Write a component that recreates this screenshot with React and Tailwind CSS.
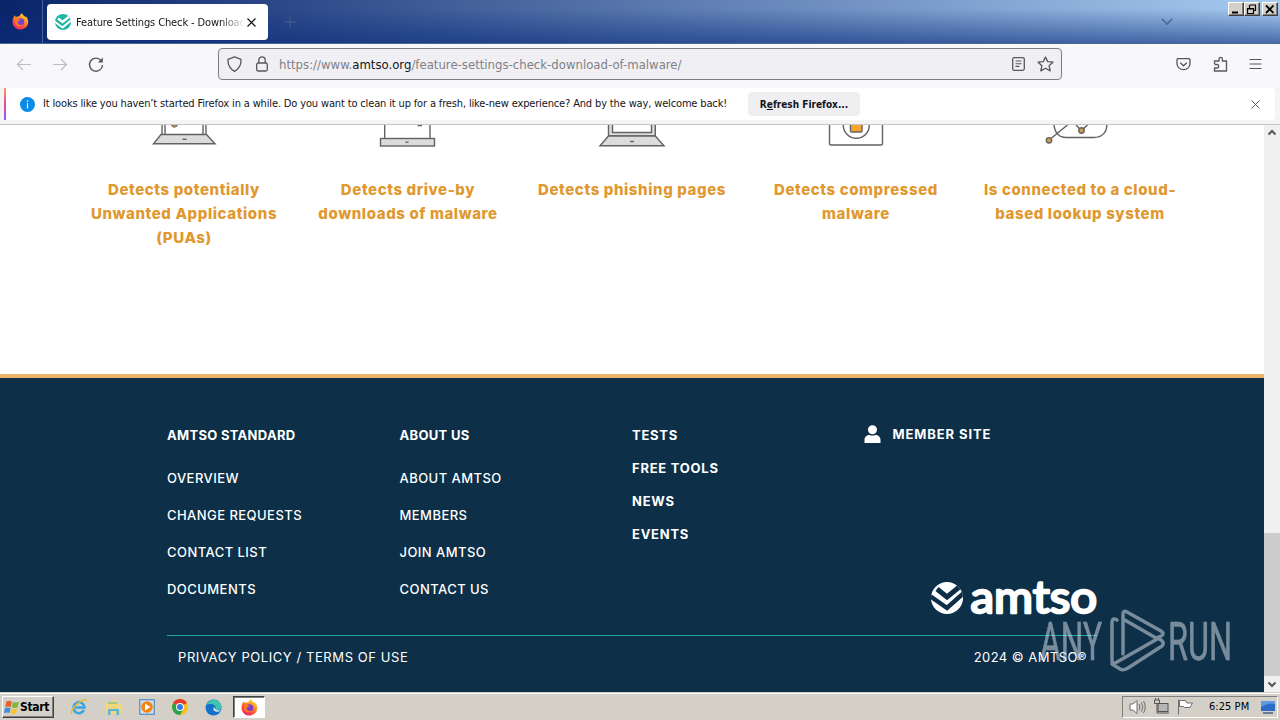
import React from "react";

const features = [
  { lines: ["Detects potentially", "Unwanted Applications", "(PUAs)"], icon: "pua" },
  { lines: ["Detects drive-by", "downloads of malware"], icon: "driveby" },
  { lines: ["Detects phishing pages"], icon: "phishing" },
  { lines: ["Detects compressed", "malware"], icon: "archive" },
  { lines: ["Is connected to a cloud-", "based lookup system"], icon: "cloud" },
];

const linkColumns = [
  {
    title: "AMTSO STANDARD",
    links: ["OVERVIEW", "CHANGE REQUESTS", "CONTACT LIST", "DOCUMENTS"],
  },
  {
    title: "ABOUT US",
    links: ["ABOUT AMTSO", "MEMBERS", "JOIN AMTSO", "CONTACT US"],
  },
];

const FirefoxLogo = () => (
  <svg width="17" height="17" viewBox="0 0 17 17">
    <defs>
      <linearGradient id="fx" x1="0.8" y1="0" x2="0.2" y2="1">
        <stop offset="0" stopColor="#ffe03a" />
        <stop offset="0.4" stopColor="#ff8a1e" />
        <stop offset="0.75" stopColor="#ff3d47" />
        <stop offset="1" stopColor="#e0208c" />
      </linearGradient>
    </defs>
    <path
      d="M1.6 4 L2.6 2.2 L4 4 C5 3.2 6.500 3 7.500 3.200 C8 1.800 9 .8 10.200 .3 C10.500 2 12 2.800 13.300 4 L14 3.500 C17 7 16.800 11 14.500 13.800 C11 17.500 5.500 17.500 2.500 14 C-.2 10.800 .3 6.500 1.600 4Z"
      fill="url(#fx)"
    />
    <circle cx="8.600" cy="9" r="3.700" fill="#7a3fd0" />
    <path d="M2.800 6.500 C4.500 5.500 6.500 5.800 8.500 7 C7.500 8.300 6 8 5.500 9 C5.800 12 9 13 11.500 11 C9.500 15 3.500 14 2.800 9Z" fill="#ff7a1c" />
  </svg>
);

const TabFavicon = () => (
  <svg width="16" height="16" viewBox="0 0 32 32">
    <defs>
      <clipPath id="favicon">
        <circle cx="16" cy="16" r="16" />
      </clipPath>
    </defs>
    <circle cx="16" cy="16" r="16" fill="#1fb5a5" />
    <g clipPath="url(#favicon)" fill="none" stroke="#fff">
      <path d="M6 9 L15 16 L30 4" strokeWidth="5" />
      <path d="M-1 15 L15 27 L34 11" strokeWidth="4" />
    </g>
  </svg>
);

const WindowButton = ({ children }) => (
  <div className="flex h-[14px] w-4 items-center justify-center border border-t-white border-r-[#404040] border-b-[#404040] border-l-white bg-[#d4d0c8] shadow-[inset_-1px_-1px_0_#808080]">
    <svg width="12" height="11" viewBox="0 0 12 11" fill="none" stroke="#000">
      {children}
    </svg>
  </div>
);

const TitleBar = () => (
  <div className="flex h-11 shrink-0 border-b border-[#4c6592] bg-[linear-gradient(to_bottom,transparent_20%,rgba(10,45,125,0.6)),linear-gradient(to_right,#0a246a,#a6caf0)]">
    <div className="flex w-[43px] items-center justify-center border-r border-[#4a5f95] pr-[2px]">
      <FirefoxLogo />
    </div>
    <div className="mt-1 ml-1 flex h-9 w-[221px] items-center rounded bg-white pl-2">
      <TabFavicon />
      <div className="ml-[5px] w-[169px] overflow-hidden pt-[2px] text-[11px] tracking-[-0.12px] whitespace-nowrap text-[#15141a] [mask-image:linear-gradient(to_right,#000_85%,transparent)]">
        Feature Settings Check - Download of Malware
      </div>
      <svg className="ml-[2px]" width="9" height="9" viewBox="0 0 9 9" stroke="#15141a" strokeWidth="1.2">
        <path d="M.5 .5 L8.500 8.500 M8.500 .5 L.5 8.500" />
      </svg>
    </div>
    <svg className="mt-4 ml-4" width="12" height="12" viewBox="0 0 12 12" stroke="#4c5f80">
      <path d="M6 0.500 V11.500 M.5 6 H11.500" />
    </svg>
    <svg className="mt-[18px] ml-auto" width="12" height="8" viewBox="0 0 12 8" fill="none" stroke="#49689a" strokeWidth="1.600">
      <path d="M.8 .8 L6 6 L11.200 .8" />
    </svg>
    <div className="mt-[2px] mr-[2px] ml-[55px] flex">
      <WindowButton>
        <path d="M2 8.500 H8" strokeWidth="2" />
      </WindowButton>
      <WindowButton>
        <path d="M4 1 H10 M3.500 4 V1 M9.500 1 V6.500 H8 M1.500 4.500 H7.500 V9.500 H1.500Z M1 5 H8" strokeWidth="1.200" />
      </WindowButton>
      <div className="w-[2px]" />
      <WindowButton>
        <path d="M2 1.500 L9.500 9 M9.500 1.500 L2 9" strokeWidth="1.800" />
      </WindowButton>
    </div>
  </div>
);

const NavBar = () => (
  <div className="flex h-11 shrink-0 items-start bg-[#f8f8fa]">
    <div className="flex w-[218px] gap-[21px] pt-3 pl-4">
      <svg width="16" height="16" viewBox="0 0 16 16" fill="none" stroke="#bdbdc2" strokeWidth="1.200">
        <path d="M15 8.500 H1.500 M7 3 L1.500 8.500 L7 14" />
      </svg>
      <svg className="-ml-px" width="16" height="16" viewBox="0 0 16 16" fill="none" stroke="#bdbdc2" strokeWidth="1.200">
        <path d="M1 8.500 H14.500 M9 3 L14.500 8.500 L9 14" />
      </svg>
      <svg className="-ml-px" width="16" height="17" viewBox="0 0 16 17" fill="none" stroke="#56565c" strokeWidth="1.400">
        <path d="M13 4.500 A6.500 6.500 0 1 0 14.500 9" />
        <path d="M14.800 1.500 V6.500 H9.800Z" fill="#56565c" stroke="none" />
      </svg>
    </div>
    <div className="mt-1 flex h-8 w-[844px] items-center rounded border border-[#7d7d84] bg-[#f0f0f4] pl-2">
      <svg width="15" height="16" viewBox="0 0 15 16" fill="none" stroke="#56565c" strokeWidth="1.300">
        <path d="M7.500 .8 L14 3.300 C14.300 9 12 13 7.500 15.300 C3 13 .7 9 1 3.300Z" strokeLinejoin="round" />
      </svg>
      <svg className="ml-[14px]" width="12" height="16" viewBox="0 0 12 16" fill="none" stroke="#56565c" strokeWidth="1.300">
        <rect x=".7" y="7" width="10.600" height="8" rx="1.500" />
        <path d="M2.800 7 V4 A3.200 3.200 0 0 1 9.200 4 V7" />
      </svg>
      <div className="ml-[11px] pt-px text-[13px] tracking-[0.01px] text-[#808086]">
        https://www.<span className="text-[#15141a]">amtso.org</span>/feature-settings-check-download-of-malware/
      </div>
      <svg className="mr-3 ml-auto" width="13" height="14" viewBox="0 0 13 14" fill="none" stroke="#56565c" strokeWidth="1.300">
        <rect x=".7" y=".7" width="11.600" height="12.600" rx="1.500" />
        <path d="M3.500 4 H9.500 M3.500 6.700 H9.500 M3.500 9.400 H7.500" strokeWidth="1.100" />
      </svg>
      <svg className="mr-[7px]" width="17" height="16" viewBox="0 0 17 16" fill="none" stroke="#56565c" strokeWidth="1.300" strokeLinejoin="round">
        <path d="M8.500 1 L10.700 5.600 L15.900 6.200 L12.100 9.700 L13.200 14.900 L8.500 12.300 L3.800 14.900 L4.900 9.700 L1.100 6.200 L6.300 5.600Z" />
      </svg>
    </div>
    <div className="flex pt-[13px] pl-[114px]">
      <svg width="15" height="15" viewBox="0 0 15 15" fill="none" stroke="#56565c" strokeWidth="1.300">
        <path d="M2 1.700 H13 Q14 1.700 14 2.700 V6.500 A6.500 6.200 0 0 1 1 6.500 V2.700 Q1 1.700 2 1.700Z" />
        <path d="M4.200 5.700 L7.500 8.800 L10.800 5.700" />
      </svg>
      <svg className="-mt-px ml-[22px]" width="16" height="17" viewBox="0 0 16 17" fill="none" stroke="#56565c" strokeWidth="1.300" strokeLinejoin="round">
        <path d="M1.500 8 V5 H6 V3 A1.700 1.700 0 0 1 9.400 3 V5 H13.500 V15 H1.500 V12 H4 A1.700 1.700 0 0 0 4 8.500 H1.500" />
      </svg>
      <svg className="mt-px ml-5" width="13" height="12" viewBox="0 0 13 12" stroke="#56565c" strokeWidth="1.200">
        <path d="M.5 1.500 H12.500 M.5 6 H12.500 M.5 10.500 H12.500" />
      </svg>
    </div>
  </div>
);

const Notification = () => (
  <div className="flex h-[37px] shrink-0 flex-col border-b border-[#c6c6c8] bg-[#f4f4f5] pr-[5px] pl-1">
    <div className="flex h-8 items-center rounded-r bg-white">
      <div className="h-8 w-[2px] bg-[linear-gradient(to_bottom,#ff9a68,#e0508c_50%,#9059ff)]" />
      <svg className="ml-[14px]" width="15" height="15" viewBox="0 0 15 15">
        <circle cx="7.500" cy="7.500" r="7.500" fill="#0a8be6" />
        <path d="M7.500 3.500 V5 M7.500 6.300 V11.500" stroke="#fff" strokeWidth="1.200" />
      </svg>
      <div className="ml-2 w-[705px] text-[11px] tracking-[-0.148px] whitespace-nowrap text-[#15141a]">
        It looks like you haven’t started Firefox in a while. Do you want to clean it up for a fresh, like-new experience? And by the way, welcome back!
      </div>
      <div className="flex h-6 w-28 items-center justify-center rounded bg-[#efeff1] text-[10px] font-bold whitespace-nowrap text-[#15141a]">
        <span>
          R<u>e</u>fresh Firefox...
        </span>
      </div>
      <svg className="mr-[15px] ml-auto" width="9" height="9" viewBox="0 0 9 9" stroke="#5b5b66">
        <path d="M.5 .5 L8.500 8.500 M8.500 .5 L.5 8.500" />
      </svg>
    </div>
  </div>
);

const FeatureIcon = ({ name }) => (
  <svg width="224" height="53" viewBox="0 0 224 53" fill="none" stroke="#626262" strokeWidth="1.400">
    {name === "pua" && (
      <>
        <path d="M90 0 V9 M93 0 V9 M131 0 V9 M134 0 V9" />
        <path d="M89 9.500 H134.500 L143 18.800 H81.500Z" fill="#dcdcdc" />
        <path d="M110.500 14.300 H114.500" />
        <path d="M99.500 0 H105 V1 L103.500 2 H101Z" fill="#f2a02e" strokeWidth="1" />
      </>
    )}
    {name === "driveby" && (
      <>
        <path d="M88.700 0 V13 M134 0 V13 M121.500 .5 H126" />
        <rect x="84.500" y="13.500" width="54" height="7.500" fill="#dcdcdc" />
        <path d="M109.500 17.200 H112.500" />
      </>
    )}
    {name === "phishing" && (
      <>
        <path d="M88.500 0 V11 H135.300 V0" fill="#dcdcdc" />
        <path d="M92.500 0 V7.500 H131.500 V0" fill="#fff" />
        <path d="M88.500 11 H135.300 L144 20.800 H80Z" fill="#dcdcdc" />
        <path d="M110 16.500 H114" />
      </>
    )}
    {name === "archive" && (
      <>
        <path d="M85.500 -1 V18.500 Q85.500 20 87 20 H137 Q138.500 20 138.500 18.500 V-1" />
        <circle cx="112.300" cy=".2" r="13" />
        <path d="M106.500 -1 V6 Q106.500 7 107.500 7 H117 Q118 7 118 6 V-1Z" fill="#f9a52b" />
      </>
    )}
    {name === "cloud" && (
      <>
        <path d="M86 0 C87 8 91 12.500 98 12.500 H126 C134 12.500 139 7 138.700 0" />
        <path d="M83 13.500 L99.500 0 M108 0 L113.500 5.500 L119.500 0" />
        <circle cx="81" cy="15.300" r="2.700" fill="#d0a050" />
        <circle cx="113.500" cy="5.500" r="2.700" fill="#d0a050" />
      </>
    )}
  </svg>
);

const UserIcon = () => (
  <svg className="-ml-px" width="17" height="18" viewBox="0 0 17 18" fill="#fff">
    <circle cx="8.500" cy="4.700" r="4.500" />
    <path d="M.5 18 V15 C.5 11.500 3 10 5.500 10 C7 10.800 10 10.800 11.500 10 C14 10 16.500 11.500 16.500 15 V18Z" />
  </svg>
);

const AmtsoLogo = () => (
  <svg className="overflow-visible" width="166" height="36" viewBox="0 0 166 36">
    <defs>
      <clipPath id="disc">
        <circle cx="16" cy="17" r="16" />
      </clipPath>
    </defs>
    <circle cx="16" cy="17" r="16" fill="#fff" />
    <g clipPath="url(#disc)" fill="none" stroke="#0d2f48">
      <path d="M6 8 L16 16 L32 3" strokeWidth="5" />
      <path d="M-1 15 L16 27 L35 10" strokeWidth="4.500" />
    </g>
    <text
      x="39.500"
      y="31.500"
      fill="#fff"
      stroke="#fff"
      strokeWidth="2.500"
      strokeLinejoin="round"
      textLength="126.500"
      lengthAdjust="spacingAndGlyphs"
      className="font-['Lato',sans-serif] text-[45px] font-normal"
    >
      amtso
    </text>
  </svg>
);

const Watermark = () => (
  <svg className="absolute top-[608px] left-[1038px] overflow-visible" width="196" height="66" viewBox="0 0 196 66" opacity="0.5">
    <g fill="#e4e8ee" stroke="#e4e8ee" strokeWidth=".6" className="font-['Roboto',sans-serif] text-[53px] font-normal">
      <text x="2" y="51.500" textLength="62" lengthAdjust="spacingAndGlyphs">
        ANY
      </text>
      <text x="130" y="51.500" textLength="64" lengthAdjust="spacingAndGlyphs">
        RUN
      </text>
    </g>
    <g fill="none" stroke="#e4e8ee" strokeWidth="3.500" strokeLinejoin="round" strokeLinecap="round">
      <path d="M79 12 Q74 9 74 15 V52 Q74 57 79 54 L121 30" />
      <path d="M85 46 V6 Q85 2 89 4 L123 23 Q127 26 123 28 L118 30 L85 11" />
      <path d="M74 56 L82 61 Q85 63 90 60 L124 38 Q127 35 123 32 L120 30" />
    </g>
  </svg>
);

const Footer = () => (
  <footer className="flex h-[318px] flex-col border-t-4 border-[#ebb365] bg-[#0d2f48] px-[167px] text-[13px] text-white">
    <div className="grid h-[203px] w-[930px] grid-cols-4 pt-[47px]">
      {linkColumns.map((col) => (
        <div key={col.title}>
          <p className="leading-5 font-bold tracking-[0.3px]">{col.title}</p>
          <ul className="mt-[15px]">
            {col.links.map((link) => (
              <li key={link} className="h-[37px] leading-[37px] font-medium tracking-[0.45px]">
                {link}
              </li>
            ))}
          </ul>
        </div>
      ))}
      <div className="font-bold tracking-[0.75px]">
        {["TESTS", "FREE TOOLS", "NEWS", "EVENTS"].map((item) => (
          <p key={item} className="h-[33px] leading-5">
            {item}
          </p>
        ))}
      </div>
      <div className="flex items-start">
        <UserIcon />
        <p className="ml-3 leading-[18px] font-bold tracking-[0.9px]">MEMBER SITE</p>
      </div>
    </div>
    <div className="flex h-[54px] w-[930px] justify-end">
      <AmtsoLogo />
    </div>
    <div className="h-px w-[930px] bg-[#1fa79b]" />
    <div className="flex w-[930px] justify-between pt-[11px] pr-[10px] pl-[11px] leading-5 tracking-[0.58px]">
      <p>PRIVACY POLICY / TERMS OF USE</p>
      <p className="tracking-[0.45px]">2024 © AMTSO®</p>
    </div>
  </footer>
);

const Arrow = ({ up }) => (
  <svg width="16" height="16" viewBox="0 0 16 16" fill="none" stroke="#55565a" strokeWidth="2">
    <path d={up ? "M4.500 9.500 L8 6 L11.500 9.500" : "M4.500 6.500 L8 10 L11.500 6.500"} />
  </svg>
);

const Scrollbar = () => (
  <div className="flex w-4 flex-col bg-[#f0f0f0]">
    <Arrow up />
    <div className="mt-auto h-[143px] bg-[#cdcdcd]" />
    <Arrow />
  </div>
);

const TaskIcons = () => (
  <div className="ml-4 flex items-center gap-[17px]">
    <svg width="18" height="18" viewBox="0 0 18 18" fill="none">
      <path d="M14 12 A5.500 5.500 0 1 1 14.500 9.500 H5" stroke="#38a5e4" strokeWidth="2.600" />
      <path d="M2 16 C-1 12 12 0 17 2" stroke="#e9bd35" strokeWidth="1.500" />
    </svg>
    <svg width="17" height="17" viewBox="0 0 17 17">
      <path d="M1 3 H6 L7 1.500 H13 V5 H16 V15 H1Z" fill="#f0d77b" />
      <path d="M3 3 H12 V5 H3Z" fill="#a5c98a" />
      <path d="M3 16 V10 H14 V16 H11.500 V12 H5.500 V16Z" fill="#59b5dc" />
    </svg>
    <svg width="16" height="16" viewBox="0 0 16 16">
      <rect x=".7" y=".7" width="14.600" height="14.600" fill="#cfdfeb" stroke="#5b94c9" strokeWidth="1.300" />
      <circle cx="8" cy="8" r="5.800" fill="#f28413" />
      <path d="M6 4.500 L11.500 8 L6 11.500Z" fill="#fff" />
    </svg>
    <svg width="16" height="16" viewBox="0 0 16 16">
      <circle cx="8" cy="8" r="8" fill="#fbc116" />
      <path d="M8 8 L1.100 4 A8 8 0 0 1 14.900 4Z" fill="#e33b2e" />
      <path d="M8 8 L1.100 4 A8 8 0 0 0 8 16 L11.500 10Z" fill="#2ba24c" />
      <circle cx="8" cy="8" r="4" fill="#fff" />
      <circle cx="8" cy="8" r="3" fill="#3978e6" />
    </svg>
    <svg width="17" height="17" viewBox="0 0 17 17">
      <circle cx="8.500" cy="8.500" r="8" fill="#1470c8" />
      <path d="M1 6 C4 -1.500 15 -1 16.500 7 C17 12 11 11.500 10.500 10 C12 6 6 3.500 1 6Z" fill="#3fc4b0" />
      <path d="M9 8 C7.500 10 9 13.500 14 12.500 L16.500 11 C13 12 10 11 9 8Z" fill="#e4eef2" />
    </svg>
  </div>
);

const Taskbar = () => (
  <div className="flex h-7 shrink-0 items-end border-t border-[#d4d0c8] bg-[#d4d0c8] pb-[2px] shadow-[inset_0_1px_0_#fff]">
    <div className="ml-[2px] flex h-[22px] w-[52px] items-center border border-t-white border-r-[#404040] border-b-[#404040] border-l-white pl-[1px] shadow-[inset_-1px_-1px_0_#808080]">
      <svg width="16" height="15" viewBox="0 0 16 15">
        <path d="M2.500 1.500 Q5 .2 7.800 1.500 L6.800 7 Q4 5.800 1.200 7Z" fill="#e9602a" />
        <path d="M8.800 2 Q11.500 3.300 15 1.800 L13.500 7.300 Q10.500 8.500 7.800 7.300Z" fill="#7fb63b" />
        <path d="M1 8 Q3.800 6.800 6.600 8 L5.500 13 Q3 12 0 13Z" fill="#3d8fdb" />
        <path d="M7.500 8.300 Q10.500 9.500 13.200 8.300 L12 13.500 Q9 15 6.400 13.500Z" fill="#f6c630" />
      </svg>
      <span className="text-[12px] font-bold tracking-[-0.3px] text-black">Start</span>
    </div>
    <div className="flex h-[22px] items-center">
      <TaskIcons />
    </div>
    <div className="ml-[11px] flex h-[22px] w-8 items-center justify-center border border-t-[#404040] border-r-white border-b-white border-l-[#404040] bg-white shadow-[inset_1px_1px_0_#808080]">
      <FirefoxLogo />
    </div>
    <div className="mr-[2px] ml-auto flex h-[22px] w-[156px] items-center border border-t-[#808080] border-r-white border-b-white border-l-[#808080]">
      <svg className="ml-[6px]" width="67" height="18" viewBox="0 0 67 18" fill="none" stroke="#6e6e6e">
        <path d="M1 6 H4 L8 2.500 V15.500 L4 12 H1Z" fill="#fff" />
        <path d="M10 6 Q12 9 10 12 M12.500 4.500 Q15 9 12.500 13.500 M14.500 3 Q18 9 14.500 15" />
        <rect x="29" y="5.500" width="10" height="8" fill="#b5b5b5" stroke="#555" />
        <path d="M25.500 2 H30.500 V5.500 H25.500Z M26.500 0 V2 M29.500 0 V2 M28 5.500 V15 H40 M31 13.500 H37" stroke="#555" />
        <path d="M49.500 1.500 V16.500 M50.500 2.500 H56.500 L58 5 H63.500 L61 9.500 H55.500 L54.500 8.500 H50.500Z" fill="#fff" />
      </svg>
      <span className="ml-[13px] text-[11px] tracking-[0.05px] whitespace-nowrap text-black">6:25 PM</span>
      <svg className="ml-auto" width="17" height="15" viewBox="0 0 17 15">
        <path d="M1 1 H15 V11 H1Z" fill="#2b6cc4" />
        <path d="M1 7 Q8 2 15 4 V1 H1Z" fill="#5d9ce2" />
        <path d="M3 13 H13" stroke="#4b5f7d" strokeWidth="1.500" />
      </svg>
    </div>
  </div>
);

export default function App() {
  return (
    <div className="relative flex h-[720px] w-[1280px] flex-col overflow-hidden bg-white font-['DejaVu_Sans_Condensed','DejaVu_Sans',sans-serif]">
      <TitleBar />
      <NavBar />
      <Notification />
      <div className="flex h-[567px] shrink-0">
        <main className="w-[1264px] font-['Inter',sans-serif]">
          <div className="grid h-[249px] grid-cols-[repeat(5,224px)] pl-[72px]">
            {features.map((feature) => (
              <div key={feature.icon} className="text-center">
                <FeatureIcon name={feature.icon} />
                <h3 className="text-[15px] leading-6 font-extrabold tracking-[0.6px] text-[#e0982f]">
                  {feature.lines.map((line) => (
                    <span key={line} className="block whitespace-nowrap">
                      {line}
                    </span>
                  ))}
                </h3>
              </div>
            ))}
          </div>
          <Footer />
        </main>
        <Scrollbar />
      </div>
      <Taskbar />
      <Watermark />
    </div>
  );
}
